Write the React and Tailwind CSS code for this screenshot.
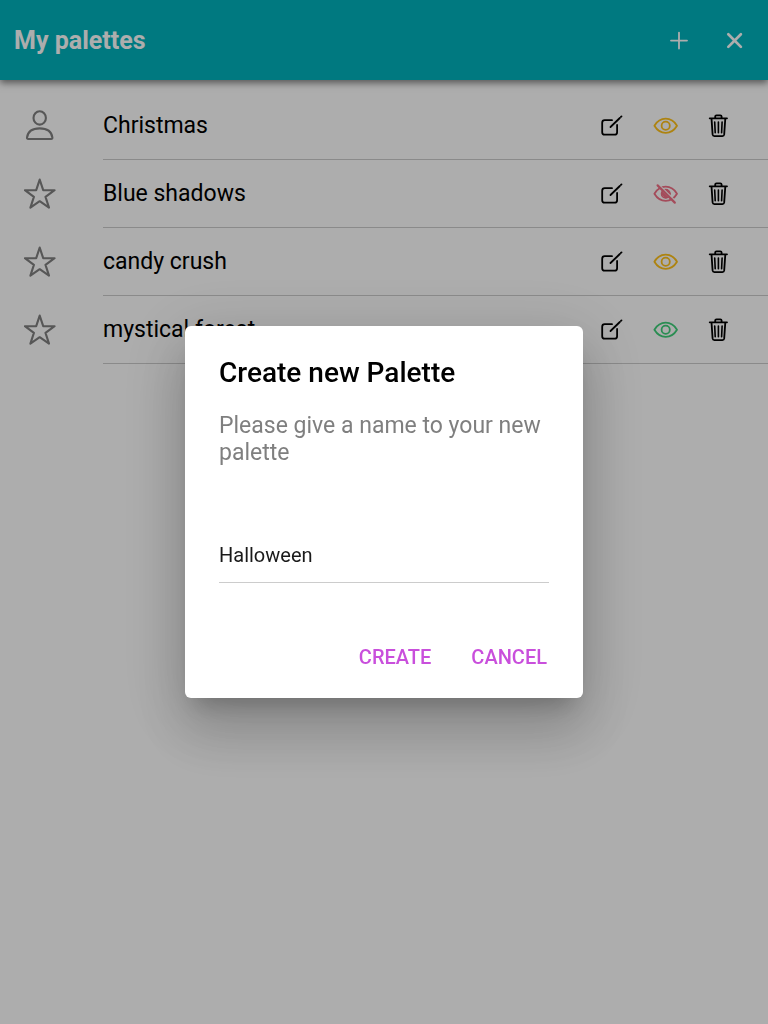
import { useState } from 'react';

const PALETTES = [
  { name: 'Christmas', kind: 'own', visibility: 'pending' },
  { name: 'Blue shadows', kind: 'featured', visibility: 'hidden' },
  { name: 'candy crush', kind: 'featured', visibility: 'pending' },
  { name: 'mystical forest', kind: 'featured', visibility: 'public' },
];

const EYE_COLORS = {
  pending: 'text-[#ffc21a]',
  hidden: 'text-[#f27086]',
  public: 'text-[#3fd07a]',
};

function Icon({ children, className = '' }) {
  return (
    <svg
      viewBox="0 0 32 32"
      fill="none"
      stroke="currentColor"
      strokeWidth="1.8"
      strokeLinecap="round"
      strokeLinejoin="round"
      aria-hidden="true"
      className={`size-8 flex-none ${className}`}
    >
      {children}
    </svg>
  );
}

function PersonIcon() {
  return (
    <Icon>
      <g strokeWidth="2.1">
        <ellipse cx="15.7" cy="7.9" rx="6.2" ry="6.7" />
        <path d="M3 27.6C3.8 21.6 8.6 18.4 15.7 18.4S27.6 21.6 28.4 27.6Q28.5 29 27.2 29H4.2Q2.9 29 3 27.6Z" />
      </g>
    </Icon>
  );
}

function StarIcon() {
  return (
    <Icon>
      <path
        d="M15.7 1.6 19.2 12.2H30.6L21.5 18.9 25 29.6 15.7 23.2 6.4 29.6 9.9 18.9.9 12.2H12.2Z"
        strokeWidth="2.1"
      />
    </Icon>
  );
}

function EditIcon() {
  return (
    <Icon>
      <path d="M18 10.2H10.7Q8.2 10.2 8.2 12.7V22.2Q8.2 24.7 10.7 24.7H20.6Q23.1 24.7 23.1 22.2V15" />
      <path d="M16.5 17 25.8 8M27 6.8 27.5 6.4" />
    </Icon>
  );
}

function EyeIcon({ hidden }) {
  return (
    <Icon>
      <path d="M6.4 15.7C9.2 10.9 13.2 8.6 17.7 8.6S26.2 10.9 29 15.7C26.2 20.4 22.2 22.8 17.7 22.8S9.2 20.4 6.4 15.7Z" />
      <circle cx="17.7" cy="15.7" r="4.1" />
      {hidden && (
        <>
          <path d="M14.4 15.4 18 19M18.4 12.4 21.6 15.6" strokeWidth="2.6" />
          <path d="M11 6.6 27.8 23.2" stroke="#ffffff" strokeWidth="1.2" />
          <path d="M9.6 7.4 26.8 24.6" strokeWidth="2.2" />
        </>
      )}
    </Icon>
  );
}

function TrashIcon() {
  return (
    <Icon>
      <path d="M7.7 8.3H25M9.5 8.4 10.6 24.4Q10.8 26.1 12.4 26.1H20.4Q22 26.1 22.2 24.4L23.3 8.4" />
      <path d="M13.2 8.1V6.6Q13.2 5.3 14.5 5.3H18.3Q19.6 5.3 19.6 6.6V8.1" />
      <path d="M16.4 12V22.8M12.7 12 13.2 22.8M20.1 12 19.6 22.8" strokeWidth="1.6" />
    </Icon>
  );
}

function Header() {
  return (
    <header className="flex h-20 items-center justify-between bg-[#00b3bd] pt-0.5 pr-[17px] pl-3.5 text-white shadow-[0_3px_7px_rgba(0,0,0,0.5)]">
      <h1 className="text-[25px] leading-8 font-bold">My palettes</h1>
      <div className="flex gap-6">
        <button type="button" aria-label="Add palette">
          <Icon>
            <path d="M16 7.6V23.6M8 15.6H24" />
          </Icon>
        </button>
        <button type="button" aria-label="Close">
          <Icon>
            <path d="M9.3 9.3 21.9 21.9M21.9 9.3 9.3 21.9" strokeWidth="2.7" />
          </Icon>
        </button>
      </div>
    </header>
  );
}

function PaletteRow({ palette }) {
  return (
    <li className="flex h-[68px] items-center pl-6">
      <span className="w-[79px] flex-none text-[#808080]">
        {palette.kind === 'own' ? <PersonIcon /> : <StarIcon />}
      </span>
      <div className="flex h-full min-w-0 flex-1 items-center border-b border-[#cccccc] pr-[34px]">
        <span className="flex-1 truncate text-[23px] leading-7">{palette.name}</span>
        <div className="flex gap-[22px]">
          <button type="button" aria-label={`Edit ${palette.name}`}>
            <EditIcon />
          </button>
          <button
            type="button"
            aria-label={`Visibility of ${palette.name}`}
            className={EYE_COLORS[palette.visibility]}
          >
            <EyeIcon hidden={palette.visibility === 'hidden'} />
          </button>
          <button type="button" aria-label={`Delete ${palette.name}`}>
            <TrashIcon />
          </button>
        </div>
      </div>
    </li>
  );
}

function CreateDialog() {
  const [name, setName] = useState('Halloween');

  return (
    <div className="fixed inset-0 flex items-center justify-center bg-black/32 p-4">
      <form
        role="dialog"
        aria-modal="true"
        aria-labelledby="dialog-title"
        onSubmit={(e) => e.preventDefault()}
        className="w-full max-w-[398px] rounded-md bg-white px-[34px] pt-[29px] pb-[15px] shadow-[0_16px_21px_-10px_rgba(0,0,0,0.2),0_34px_54px_4px_rgba(0,0,0,0.14),0_13px_65px_11px_rgba(0,0,0,0.12)]"
      >
        <h2 id="dialog-title" className="text-[28px] leading-9 font-medium">Create new Palette</h2>
        <label htmlFor="palette-name" className="mt-[21px] block text-[23px] leading-[27px] text-[#7f7f7f]">
          Please give a name to your new palette
        </label>
        <input
          id="palette-name"
          type="text"
          value={name}
          onChange={(e) => setName(e.target.value)}
          className="mt-[61px] block h-14 w-full border-b border-[#cccccc] text-xl text-[#1a1a1a] outline-none"
        />
        <div className="-mr-3.5 mt-12 flex justify-end gap-2 text-xl font-medium text-[#c94fdc]">
          <button type="submit" className="h-[52px] px-4">CREATE</button>
          <button type="button" className="h-[52px] px-4">CANCEL</button>
        </div>
      </form>
    </div>
  );
}

export default function App() {
  return (
    <div className="min-h-screen bg-white font-['Roboto',sans-serif] text-black">
      <Header />
      <main>
        <ul className="pt-3">
          {PALETTES.map((palette) => (
            <PaletteRow key={palette.name} palette={palette} />
          ))}
        </ul>
      </main>
      <CreateDialog />
    </div>
  );
}
